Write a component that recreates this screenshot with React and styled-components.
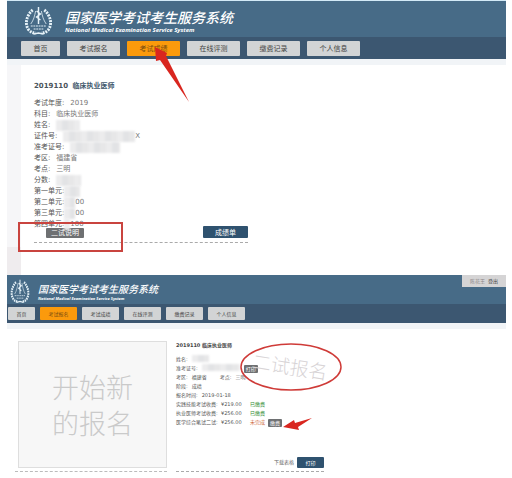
import React from "react";
import styled, { createGlobalStyle } from "styled-components";

const menu = ["首页", "考试报名", "考试成绩", "在线评测", "缴费记录", "个人信息"];

const scoreRows = [
  { label: "考试年度:", value: "2019" },
  { label: "科目:", value: "临床执业医师" },
  { label: "姓名:", hidden: 24 },
  { label: "证件号:", hidden: 72, value: "X" },
  { label: "准考证号:", hidden: 50 },
  { label: "考区:", value: "福建省" },
  { label: "考点:", value: "三明" },
  { label: "分数:", hidden: 25 },
  { label: "第一单元:", hidden: 16, tight: true },
  { label: "第二单元:", hidden: 11, value: "00", tight: true },
  { label: "第三单元:", hidden: 11, value: "00", tight: true },
  { label: "第四单元:", hidden: 6, value: "100", tight: true },
];

const feeRows = [
  { label: "实践技能考试收费:", price: "¥219.00", state: "已缴费", paid: true },
  { label: "执业医师考试收费:", price: "¥256.00", state: "已缴费", paid: true },
  { label: "医学综合笔试二试:", price: "¥256.00", state: "未完成", paid: false },
];

const GlobalStyle = createGlobalStyle`
  * {
    box-sizing: border-box;
  }
  body {
    margin: 0;
    background: #fff;
    font-family: "DejaVu Sans", "Noto Sans CJK SC", sans-serif;
    color: #555;
  }
  button {
    font-family: inherit;
    border: 0;
    padding: 0;
    cursor: pointer;
  }
  h1, h2, p, dl, dt, dd {
    margin: 0;
  }
`;
const Page = styled.div`
  padding: 0 6px 0 7px;
`;
const Screen = styled.section`
  position: relative;
`;
const Header = styled.header`
  position: relative;
  border-top: ${(p) => (p.$small ? "0" : "1px solid #d3eaf7")};
  border-bottom: 6px solid #f1f4f7;
`;
const Brand = styled.div`
  display: flex;
  align-items: center;
  gap: ${(p) => (p.$small ? "8px" : "12px")};
  height: ${(p) => (p.$small ? "29px" : "36px")};
  padding-top: 3px;
  padding-left: ${(p) => (p.$small ? "3px" : "17px")};
  background: #476b87;
  color: #fff;
`;
const BrandText = styled.div`
  display: flex;
  flex-direction: column;
`;
const BrandTitle = styled.h1`
  font-family: "Noto Sans CJK SC", sans-serif;
  font-size: ${(p) => (p.$small ? "10px" : "14px")};
  line-height: ${(p) => (p.$small ? "14px" : "19px")};
  font-style: italic;
  font-weight: 500;
  white-space: nowrap;
`;
const BrandSub = styled.p`
  font-family: "Open Sans", sans-serif;
  font-size: ${(p) => (p.$small ? "4px" : "6px")};
  line-height: ${(p) => (p.$small ? "5px" : "6px")};
  font-style: italic;
  font-weight: 700;
  white-space: nowrap;
`;
const Nav = styled.nav`
  display: flex;
  align-items: center;
  gap: ${(p) => (p.$small ? "5px" : "7px")};
  height: ${(p) => (p.$small ? "19px" : "22px")};
  padding-left: ${(p) => (p.$small ? "1px" : "14px")};
  background: #3c5771;
`;
const NavButton = styled.button`
  width: ${(p) => (p.$small ? "37px" : "53px")};
  height: ${(p) => (p.$small ? "13px" : "15px")};
  font-size: ${(p) => (p.$small ? "5px" : "7px")};
  border-radius: 1px;
  background: ${(p) => (p.$active ? "#fb9a0c" : "#d2d4d5")};
  color: ${(p) => (p.$active ? "#7a4c10" : "#444")};
  &:first-child {
    width: ${(p) => (p.$small ? "27px" : "39px")};
  }
`;
const UserBar = styled.div`
  position: absolute;
  top: 0;
  right: 0;
  display: flex;
  align-items: center;
  justify-content: center;
  gap: 3px;
  width: 44px;
  height: 12px;
  background: #d5d4d5;
  font-size: 5px;
  line-height: 8px;
  color: #8d8888;
`;
const LogoutLink = styled.a`
  color: #444;
  text-decoration: none;
`;
const ScoreBody = styled.div`
  display: flex;
`;
const Rail = styled.div`
  flex: 0 0 14px;
  background: linear-gradient(#f6f6f8 calc(100% - 28px), #efecee 0);
`;
const ScoreCard = styled.article`
  flex: 0 1 227px;
  padding: 15px 0 32px 13px;
`;
const CardTitle = styled.h2`
  font-size: ${(p) => (p.$small ? "5px" : "7px")};
  line-height: 12px;
  font-weight: 700;
  color: ${(p) => (p.$small ? "#444" : "#4a535b")};
  white-space: nowrap;
`;
const ExamName = styled.span`
  margin-left: ${(p) => (p.$small ? "0" : "2px")};
  color: ${(p) => (p.$small ? "#444" : "#41586c")};
`;
const ScoreList = styled.dl`
  padding-top: 6px;
`;
const ScoreRow = styled.div`
  display: flex;
  align-items: center;
  gap: ${(p) => (p.$tight ? "0" : "6px")};
  font-size: 7px;
  line-height: 11px;
  color: #555;
`;
const Value = styled.dd`
  display: flex;
  align-items: center;
  color: #777;
`;
const Mosaic = styled.span`
  display: inline-block;
  width: ${(p) => p.$width}px;
  height: ${(p) => (p.$small ? "7px" : "11px")};
  background: repeating-linear-gradient(90deg, #ececed 0 6px, #e2e3e5 6px 12px, #e7e7e8 12px 18px);
  filter: blur(1px);
`;
const CardFooter = styled.div`
  display: flex;
  align-items: flex-end;
  justify-content: ${(p) => (p.$small ? "flex-end" : "space-between")};
  gap: 3px;
  margin-top: ${(p) => (p.$small ? "auto" : "-4px")};
  padding: ${(p) => (p.$small ? "0 0 3px" : "0 0 4px 12px")};
  border-bottom: 1px dashed #aaa;
`;
const TagButton = styled.button`
  width: ${(p) => (p.$small ? "14px" : "38px")};
  height: ${(p) => (p.$small ? "8px" : "10px")};
  font-size: ${(p) => (p.$small ? "5px" : "7px")};
  line-height: 8px;
  border-radius: 1px;
  background: #6e7072;
  color: #fff;
`;
const MainButton = styled.button`
  width: ${(p) => (p.$small ? "27px" : "45px")};
  height: ${(p) => (p.$small ? "11px" : "12px")};
  font-size: ${(p) => (p.$small ? "5px" : "7px")};
  border-radius: 1px;
  background: #2f526f;
  color: #fff;
`;
const DownloadLink = styled.a`
  font-size: 5px;
  line-height: 11px;
  color: #666;
  text-decoration: none;
`;
const SignBody = styled.div`
  display: flex;
  gap: 9px;
  padding: 10px 0 6px 8px;
`;
const NewSign = styled.div`
  flex: 0 1 152px;
  padding: 2px 0 3px 3px;
  border-bottom: 1px dashed #bbb;
`;
const NewButton = styled.button`
  width: 100%;
  height: 127px;
  border: 1px solid #dedede;
  background: #f7f7f7;
  color: #cacaca;
  font-family: "Noto Sans CJK SC", sans-serif;
  font-size: 27px;
  line-height: 36px;
  font-weight: 300;
`;
const SignCard = styled.article`
  flex: 0 1 148px;
  display: flex;
  flex-direction: column;
`;
const SignList = styled.dl`
  padding-top: 4px;
`;
const SignRow = styled.div`
  display: flex;
  align-items: center;
  gap: 4px;
  height: 9px;
  font-size: 5px;
  line-height: 9px;
  white-space: nowrap;
  color: #555;
`;
const FeeRow = styled(SignRow)`
  display: grid;
  grid-template-columns: 41px 25px 14px 14px;
`;
const State = styled.dd`
  color: ${(p) => (p.$paid ? "#2f8a2f" : "#cf6a3c")};
`;
const Region = styled.dd`
  width: 24px;
`;
const MarkBox = styled.div`
  position: absolute;
  left: 11px;
  top: 222px;
  width: 105px;
  height: 30px;
  border: 2px solid #c9443f;
`;
const Marks = styled.svg`
  position: absolute;
  left: ${(p) => p.$left}px;
  top: ${(p) => p.$top}px;
  pointer-events: none;
`;
const Stamp = styled.span`
  position: absolute;
  left: 245px;
  top: 79px;
  font-family: "Noto Sans CJK SC", sans-serif;
  font-size: 19px;
  line-height: 24px;
  font-weight: 300;
  color: #d8d4d6;
  transform: rotate(9deg);
`;

const Logo = ({ width, height }) => (
  <svg width={width} height={height} viewBox="0 0 30 30" preserveAspectRatio="none" fill="none" stroke="#e6f2f8">
    <path d="M9 4C3 9 0 18 5 24c2 2 4 3 7 3M21 4c6 5 9 14 4 20-2 2-4 3-7 3" strokeWidth="3" strokeDasharray="2 1" />
    <path d="M15 1v17M13 5l4 3-4 3 4 3" strokeWidth="1.5" />
    <path d="M12 5c-1 5-2 9-5 13M18 5c1 5 2 9 5 13" strokeWidth="0.8" />
    <path d="M7 20h16M10 23h10" strokeWidth="1" strokeDasharray="2 0.7" />
    <path d="M10 28l5-1 5 1" strokeWidth="1.5" />
  </svg>
);

function TopBar({ small, active, children }) {
  return (
    <Header $small={small}>
      <Brand $small={small}>
        <Logo width={small ? 20 : 29} height={small ? 25 : 30} />
        <BrandText>
          <BrandTitle $small={small}>国家医学考试考生服务系统</BrandTitle>
          <BrandSub $small={small}>National Medical Examination Service System</BrandSub>
        </BrandText>
      </Brand>
      <Nav $small={small}>
        {menu.map((m) => (
          <NavButton key={m} $small={small} $active={m === active}>
            {m}
          </NavButton>
        ))}
      </Nav>
      {children}
    </Header>
  );
}

export default function App() {
  return (
    <Page>
      <GlobalStyle />
      <Screen>
        <TopBar active="考试成绩" />
        <ScoreBody>
          <Rail />
          <ScoreCard>
            <CardTitle>
              2019110 <ExamName>临床执业医师</ExamName>
            </CardTitle>
            <ScoreList>
              {scoreRows.map((r) => (
                <ScoreRow key={r.label} $tight={r.tight}>
                  <dt>{r.label}</dt>
                  <Value>
                    {r.hidden && <Mosaic $width={r.hidden} />}
                    {r.value}
                  </Value>
                </ScoreRow>
              ))}
            </ScoreList>
            <CardFooter>
              <TagButton>二试说明</TagButton>
              <MainButton>成绩单</MainButton>
            </CardFooter>
          </ScoreCard>
        </ScoreBody>
        <MarkBox />
        <Marks $left={145} $top={44} width="42" height="60" viewBox="0 0 42 60">
          <path d="M3 3L4 17L8 16L37 58L14 12L15 9Z" fill="#d9261f" />
        </Marks>
      </Screen>

      <Screen>
        <TopBar small active="考试报名">
          <UserBar>
            <span>陈花王</span>
            <LogoutLink href="#logout">登出</LogoutLink>
          </UserBar>
        </TopBar>
        <SignBody>
          <NewSign>
            <NewButton>
              开始新
              <br />
              的报名
            </NewButton>
          </NewSign>
          <SignCard>
            <CardTitle $small>
              2019110 <ExamName $small>临床执业医师</ExamName>
            </CardTitle>
            <SignList>
              <SignRow>
                <dt>姓名:</dt>
                <dd>
                  <Mosaic $small $width={17} />
                </dd>
              </SignRow>
              <SignRow>
                <dt>准考证号:</dt>
                <dd>
                  <Mosaic $small $width={38} />
                </dd>
                <TagButton $small>打印</TagButton>
              </SignRow>
              <SignRow>
                <dt>考区:</dt>
                <Region>福建省</Region>
                <dt>考点:</dt>
                <dd>三明</dd>
              </SignRow>
              <SignRow>
                <dt>阶段:</dt>
                <dd>成绩</dd>
              </SignRow>
              <SignRow>
                <dt>报名时间:</dt>
                <dd>2019-01-18</dd>
              </SignRow>
              {feeRows.map((f) => (
                <FeeRow key={f.label}>
                  <dt>{f.label}</dt>
                  <dd>{f.price}</dd>
                  <State $paid={f.paid}>{f.state}</State>
                  {!f.paid && <TagButton $small>缴费</TagButton>}
                </FeeRow>
              ))}
            </SignList>
            <CardFooter $small>
              <DownloadLink href="#form">下载表格</DownloadLink>
              <MainButton $small>打印</MainButton>
            </CardFooter>
          </SignCard>
        </SignBody>
        <Stamp>二试报名</Stamp>
        <Marks $left={230} $top={64} width="110" height="100" viewBox="0 0 110 100">
          <ellipse cx="54" cy="28" rx="50" ry="23" fill="none" stroke="#cf3b38" strokeWidth="1.5" />
          <path d="M46 88L57 81L58 84L75 79L61 88L62 91Z" fill="#d9261f" />
        </Marks>
      </Screen>
    </Page>
  );
}
